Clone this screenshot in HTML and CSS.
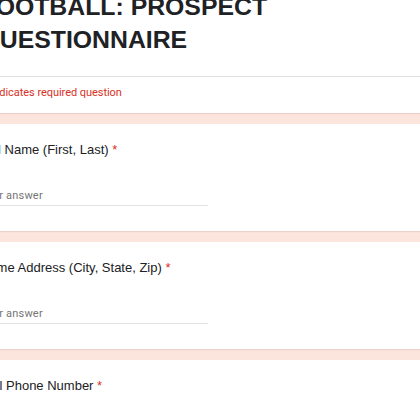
FILE: index.html
```html
<!DOCTYPE html>
<html lang="en">
<head>
<meta charset="utf-8">
<title>Football: Prospect Questionnaire</title>
<link rel="stylesheet" href="styles.css">
</head>
<body>
<main class="form">
  <section class="card header-card">
    <h1 class="title">FOOTBALL: PROSPECT<br>QUESTIONNAIRE</h1>
    <div class="required-note">* Indicates required question</div>
  </section>
  <section class="card question">
    <div class="q-label">Full Name (First, Last) <span class="req">*</span></div>
    <div class="answer">Your answer</div>
  </section>
  <section class="card question">
    <div class="q-label">Home Address (City, State, Zip) <span class="req">*</span></div>
    <div class="answer">Your answer</div>
  </section>
  <section class="card question">
    <div class="q-label">Cell Phone Number <span class="req">*</span></div>
    <div class="answer">Your answer</div>
  </section>
</main>
</body>
</html>
```
FILE: styles.css
```css
html, body {
  margin: 0;
  padding: 0;
  background: #fce5dd;
  overflow: hidden;
}
.form {
  display: flex;
  flex-direction: column;
  gap: 11px;
  width: 480px;
  margin-left: -20px;
  margin-top: -10px;
}
.card {
  background: #ffffff;
  box-shadow: 0 1px 1px rgba(160, 120, 110, 0.18);
}
.header-card {
  padding-bottom: 12px;
}
.title {
  margin: 0;
  padding: 0 0 20px 0.5px;
  font-family: "Liberation Sans", Arial, sans-serif;
  font-weight: 700;
  font-size: 24.8px;
  line-height: 33px;
  color: #202124;
  border-bottom: 1px solid #e2e2e2;
}
.required-note {
  margin-top: 8px;
  padding-left: 3px;
  font-family: Roboto, "Liberation Sans", sans-serif;
  font-size: 11px;
  line-height: 16px;
  color: #d93025;
  letter-spacing: -0.05px;
}
.question {
  padding: 16px 0 25px 0;
}
.q-label {
  font-family: "Liberation Sans", Arial, sans-serif;
  font-size: 13px;
  line-height: 20px;
  color: #202124;
}
.req {
  color: #d93025;
}
.answer {
  margin-top: 28px;
  width: 228px;
  padding-bottom: 1px;
  font-family: Roboto, "Liberation Sans", sans-serif;
  font-size: 11px;
  line-height: 16px;
  color: #757575;
  letter-spacing: 0.2px;
  border-bottom: 1px solid #e3e3e3;
}
```
